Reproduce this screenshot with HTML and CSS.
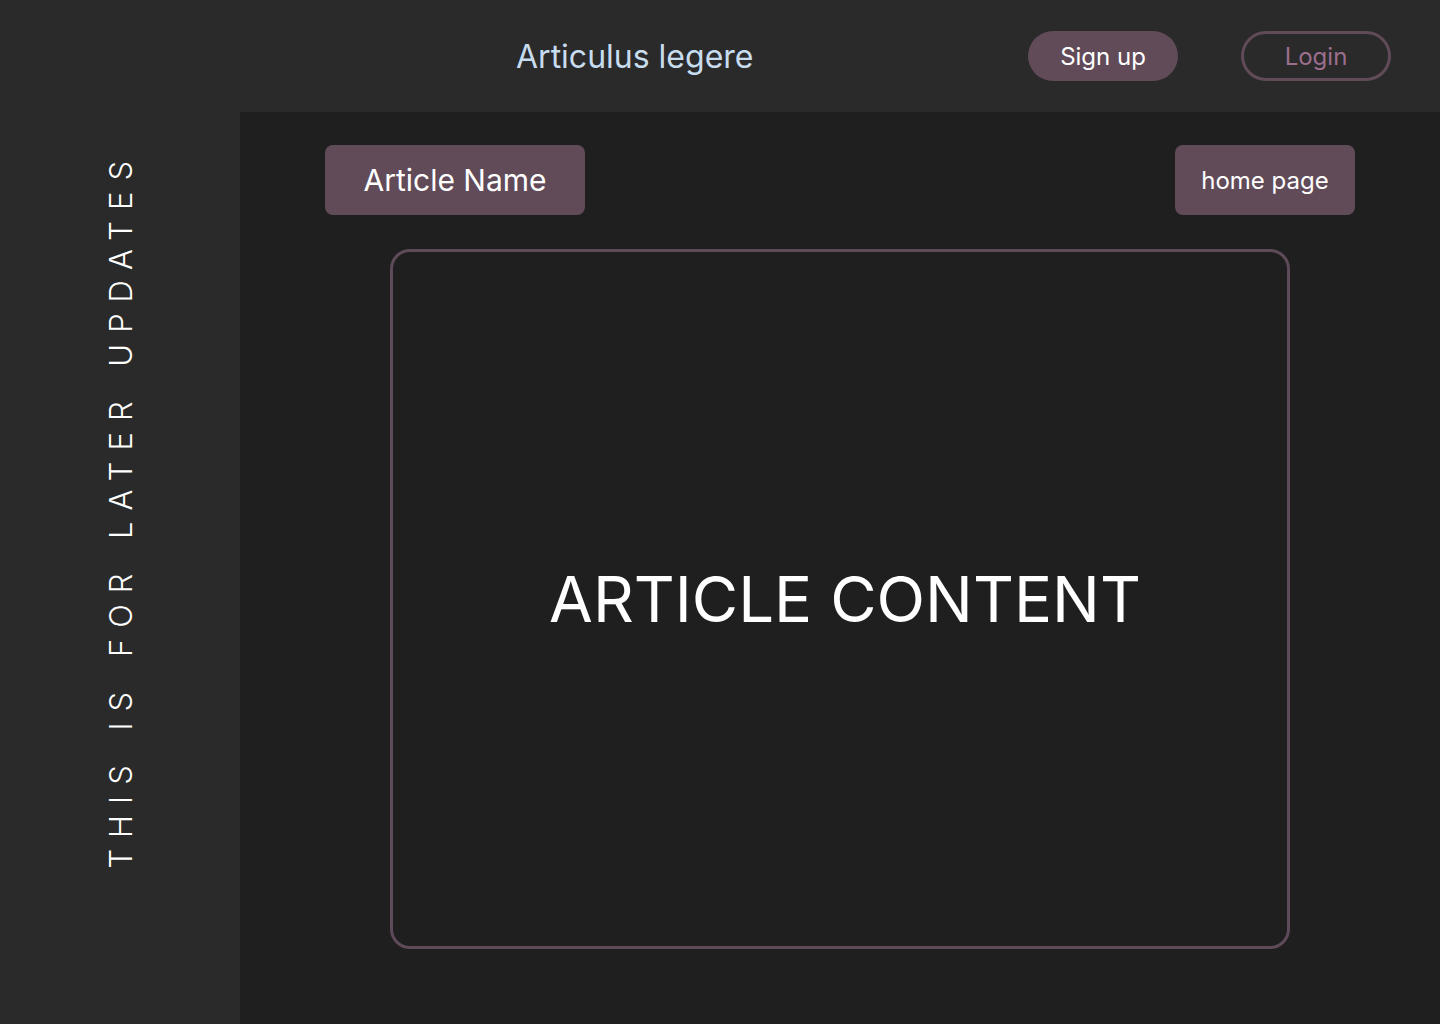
FILE: index.html
```html
<!DOCTYPE html>
<html lang="en">
<head>
<meta charset="utf-8">
<title>Articulus legere</title>
<link rel="stylesheet" href="styles.css">
</head>
<body>
<header class="topbar">
  <h1 class="brand">Articulus legere</h1>
  <div class="auth">
    <button class="btn-signup">Sign up</button>
    <button class="btn-login">Login</button>
  </div>
</header>
<div class="layout">
  <aside class="sidebar">
    <p class="side-text">THIS IS FOR LATER UPDATES</p>
  </aside>
  <main class="main">
    <div class="toolbar">
      <div class="article-name">Article Name</div>
      <button class="home-btn">home page</button>
    </div>
    <section class="content-box">
      <p class="content-text">ARTICLE CONTENT</p>
    </section>
  </main>
</div>
</body>
</html>
```
FILE: styles.css
```css
* { box-sizing: border-box; }
html, body { margin: 0; padding: 0; }
body {
  width: 1440px;
  height: 1024px;
  overflow: hidden;
  background: #1f1f1f;
  font-family: Inter, "Noto Sans", sans-serif;
  color: #fff;
}
button { font-family: inherit; cursor: pointer; }
.topbar {
  height: 112px;
  background: #2a2a2a;
  display: flex;
  align-items: center;
  padding: 0 49px 0 516px;
}
.brand {
  margin: 0;
  padding-top: 2px;
  font-size: 32px;
  font-weight: 400;
  color: #c7ddef;
  line-height: 1;
}
.auth {
  margin-left: auto;
  display: flex;
  gap: 63px;
}
.btn-signup, .btn-login {
  width: 150px;
  height: 50px;
  border-radius: 25px;
  font-size: 24px;
  line-height: 1;
  padding-top: 2px;
}
.btn-signup {
  background: #614b59;
  border: none;
  color: #fff;
}
.btn-login {
  background: transparent;
  border: 3px solid #614b59;
  color: #9b6e8e;
}
.layout {
  display: flex;
  height: 912px;
}
.sidebar {
  width: 240px;
  flex: none;
  background: #2a2a2a;
  display: flex;
  justify-content: center;
  align-items: flex-start;
  padding-top: 38px;
}
.side-text {
  margin: 0;
  writing-mode: vertical-rl;
  transform: rotate(180deg);
  font-size: 31px;
  font-weight: 300;
  letter-spacing: 11px;
  word-spacing: 4px;
  line-height: 1;
}
.main {
  flex: 1;
  padding: 33px 85px 0;
}
.toolbar {
  display: flex;
  justify-content: space-between;
}
.article-name {
  width: 260px;
  height: 70px;
  border-radius: 8px;
  background: #614b59;
  display: flex;
  align-items: center;
  justify-content: center;
  font-size: 30px;
}
.home-btn {
  width: 180px;
  height: 70px;
  border-radius: 8px;
  background: #614b59;
  border: none;
  color: #fff;
  font-size: 24px;
}
.content-box {
  width: 900px;
  height: 700px;
  margin: 34px auto 0;
  border: 3px solid #5e4a58;
  border-radius: 20px;
  display: flex;
  align-items: center;
  justify-content: center;
}
.content-text {
  margin: 0;
  font-size: 63.5px;
  line-height: 1;
  padding-left: 10px;
}
```
